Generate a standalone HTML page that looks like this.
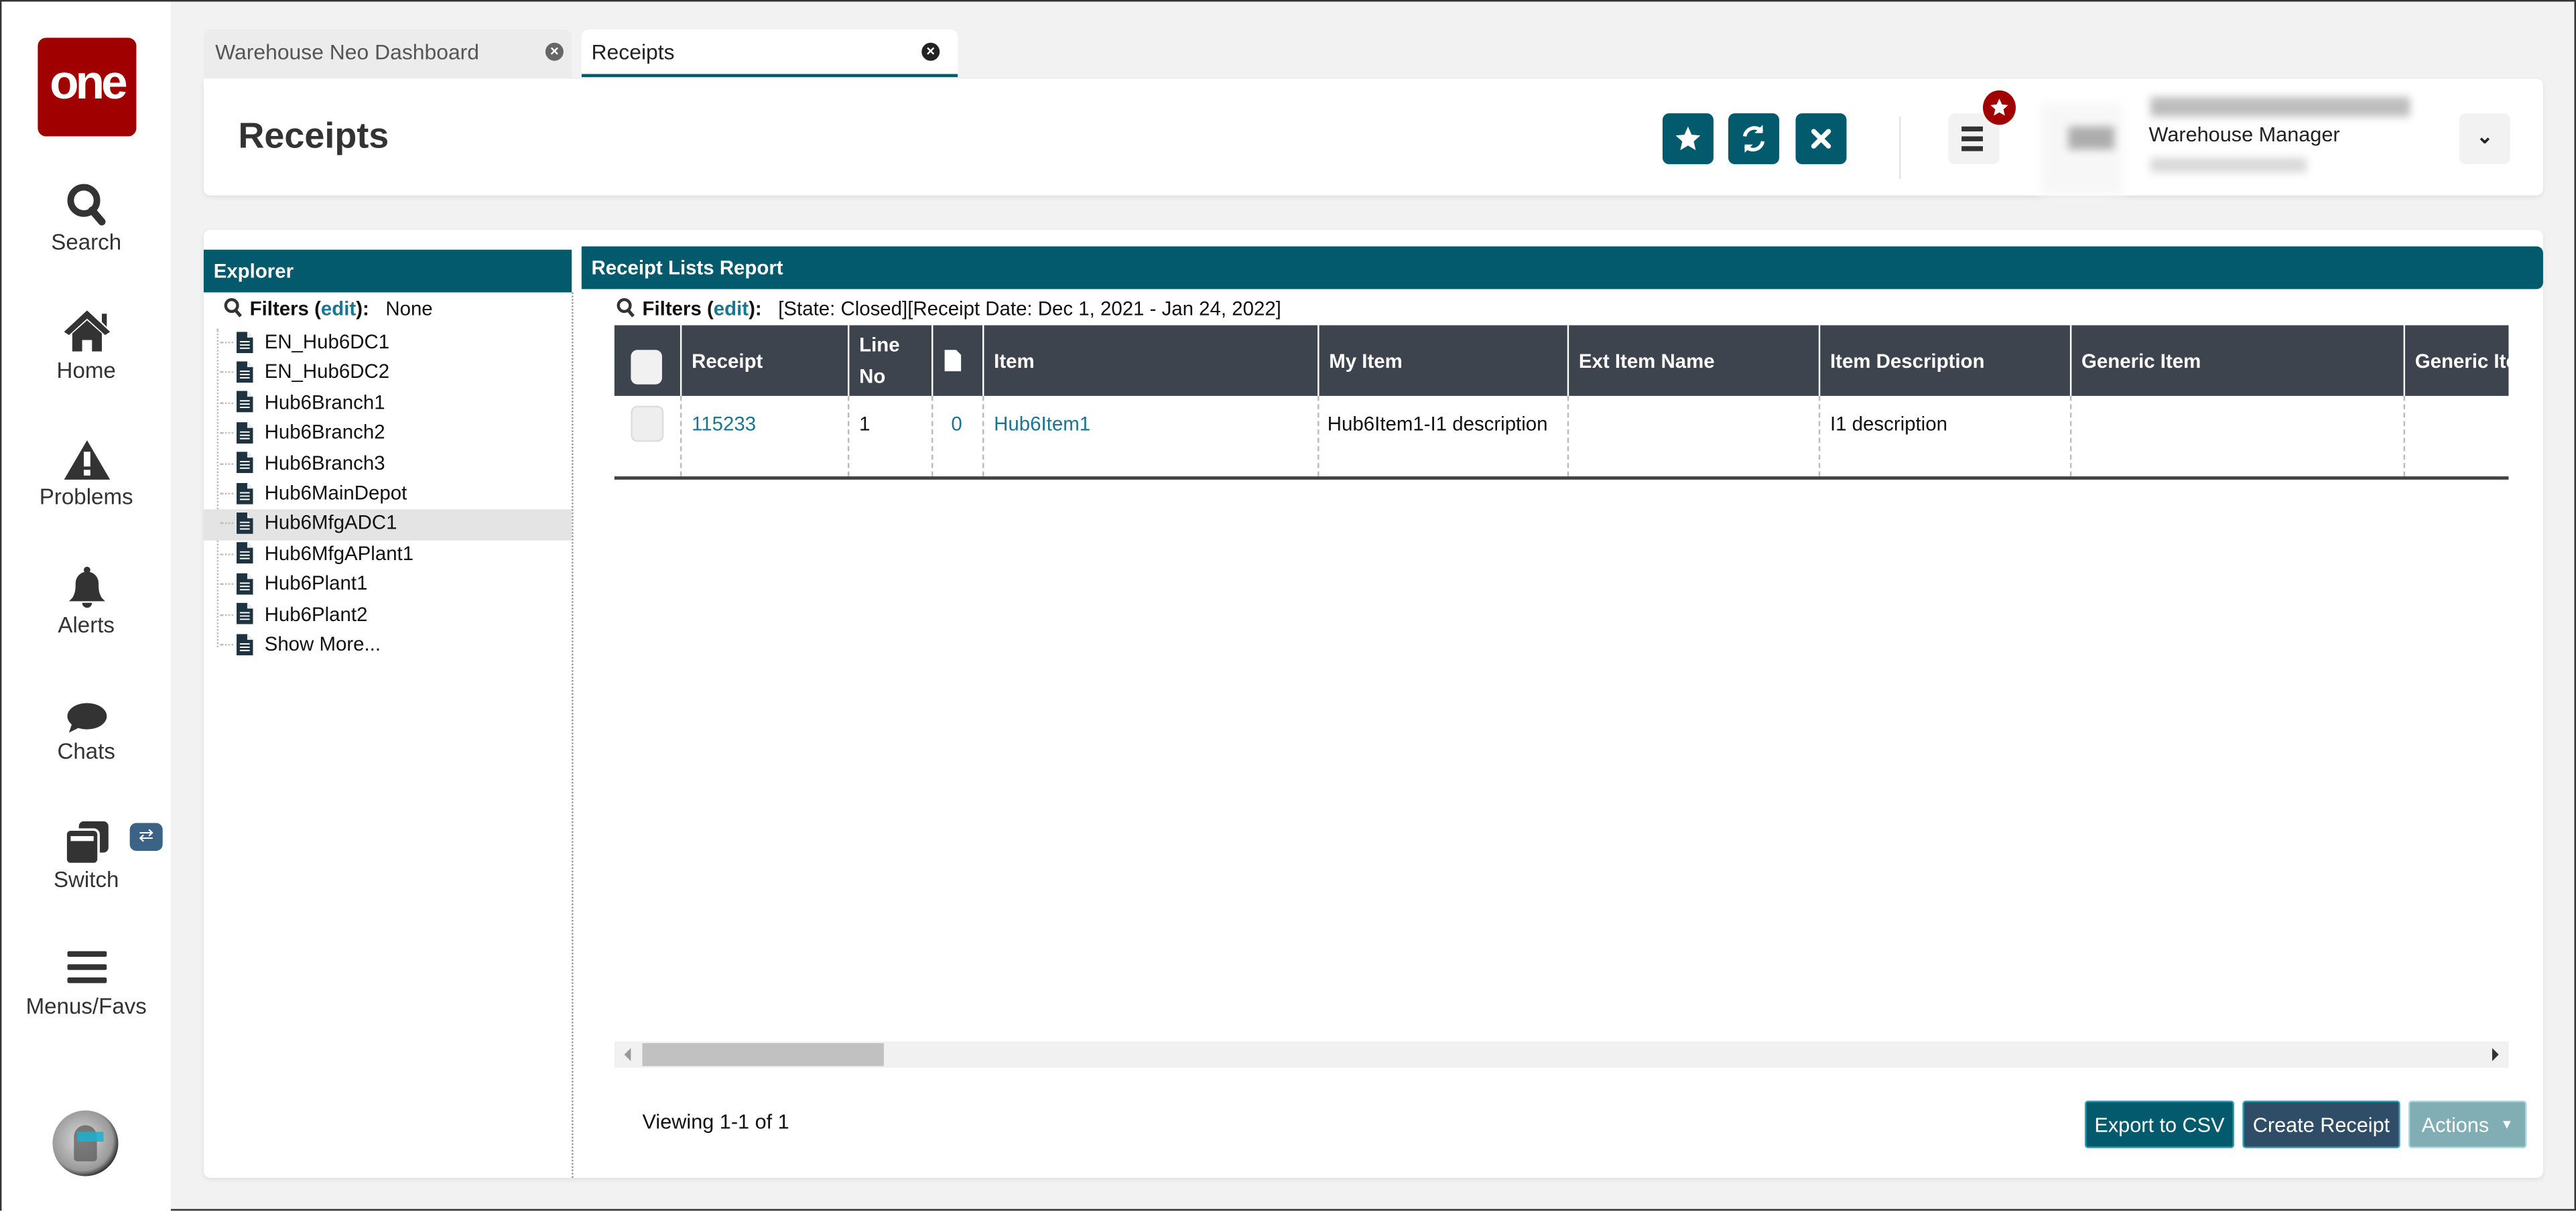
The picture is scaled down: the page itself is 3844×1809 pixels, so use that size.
<!DOCTYPE html>
<html><head><meta charset="utf-8"><style>
html,body{margin:0;padding:0;width:3844px;height:1807px;overflow:hidden;background:#f2f2f2}
#s{position:absolute;left:0;top:0;width:1568px;height:737px;transform:scale(2.4515,2.4518);transform-origin:0 0;font-family:"Liberation Sans",sans-serif;font-size:12px;color:#111;background:#f2f2f2;box-sizing:border-box;border:1px solid #333}
.a{position:absolute}
.side{left:0;top:0;width:103px;height:737px;background:#fff}
.lbl{position:absolute;width:103px;text-align:center;font-size:13.5px;color:#333;left:0}
.tb{background:#035a6c;border-radius:4px;width:31px;height:31px}
.tree{left:160px;font-size:12px}
.hc{position:absolute;top:197px;height:43px;border-left:1px solid #fff;color:#fff;font-weight:bold;font-size:12px;box-sizing:border-box;padding-left:6px;display:flex;align-items:center}
.dc{position:absolute;top:240px;height:49px;border-left:1px dashed #bbb}
.btn{position:absolute;top:669px;height:29px;color:#fff;font-size:12.5px;display:flex;align-items:center;justify-content:center;border:1px solid #2aa0b8;border-radius:2px;box-sizing:border-box}
.blur{filter:blur(2.5px);background:#444;opacity:.35}
</style></head><body><div id="s">
<div class="a side"></div>
<div class="a" style="left:22px;top:22px;width:60px;height:60px;background:#a00000;border-radius:5px;color:#fff;font-size:29px;font-weight:bold;text-align:center;line-height:56px;letter-spacing:-2px">one</div>
<svg class="a" style="left:39px;top:110px" width="26" height="28" viewBox="0 0 26 28"><circle cx="11" cy="11" r="8" fill="none" stroke="#333" stroke-width="4"/><path d="M16 17l6 7" stroke="#333" stroke-width="4.5" stroke-linecap="round"/></svg>
<div class="lbl" style="top:139px">Search</div>
<svg class="a" style="left:37px;top:187px" width="30" height="26" viewBox="0 0 30 26"><path d="M15 1L1 14l3 2L15 6l11 10 3-2z M24 3h3v8l-3-3z" fill="#333"/><path d="M6 15l9-8 9 8v11h-6v-7h-6v7H6z" fill="#333"/></svg>
<div class="lbl" style="top:217px">Home</div>
<svg class="a" style="left:37px;top:266px" width="30" height="26" viewBox="0 0 30 26"><path d="M15 1L1 25h28z" fill="#333"/><rect x="13" y="8" width="4" height="9" fill="#fff"/><rect x="13" y="19" width="4" height="3.5" fill="#fff"/></svg>
<div class="lbl" style="top:294px">Problems</div>
<svg class="a" style="left:39px;top:343px" width="26" height="26" viewBox="0 0 26 26"><circle cx="13" cy="3" r="2" fill="#333"/><path d="M4 20c2-3 2-6 2-9a7 7 0 0114 0c0 3 0 6 2 9l2 2H2z" fill="#333"/><path d="M10 23a3 3 0 006 0z" fill="#333"/></svg>
<div class="lbl" style="top:372px">Alerts</div>
<svg class="a" style="left:38px;top:424px" width="28" height="24" viewBox="0 0 28 24"><ellipse cx="14" cy="11" rx="12" ry="8" fill="#333"/><path d="M5 15l-2 6 8-4z" fill="#333"/></svg>
<div class="lbl" style="top:449px">Chats</div>
<svg class="a" style="left:38px;top:498px" width="28" height="28" viewBox="0 0 28 28"><rect x="9" y="1" width="18" height="19" rx="3" fill="#333"/><rect x="1" y="6" width="20" height="21" rx="3" fill="#333" stroke="#fff" stroke-width="1.5"/><rect x="4" y="10" width="14" height="3" fill="#fff"/></svg>
<div class="a" style="left:78px;top:500px;width:20px;height:17px;background:#3a6385;border-radius:4px;color:#fff;font-size:11px;text-align:center;line-height:17px">⇄</div>
<div class="lbl" style="top:527px">Switch</div>
<svg class="a" style="left:40px;top:578px" width="24" height="20" viewBox="0 0 24 20"><rect x="0" y="0" width="24" height="3.5" rx="1" fill="#333"/><rect x="0" y="8" width="24" height="3.5" rx="1" fill="#333"/><rect x="0" y="16" width="24" height="3.5" rx="1" fill="#333"/></svg>
<div class="lbl" style="top:604px">Menus/Favs</div>
<div class="a" style="left:31px;top:675px;width:40px;height:40px;border-radius:50%;background:radial-gradient(circle at 45% 45%,#ddd,#999 60%,#333 72%,#222)"></div>
<div class="a" style="left:44px;top:684px;width:14px;height:22px;border-radius:7px 7px 2px 2px;background:#555;opacity:.7"></div>
<div class="a" style="left:46px;top:688px;width:16px;height:6px;background:#1ab0d0;opacity:.85"></div>

<div class="a" style="left:123px;top:17px;width:224px;height:29px;background:#ececec;border-radius:4px 4px 0 0"></div>
<div class="a" style="left:130px;top:23px;color:#555;font-size:13px">Warehouse Neo Dashboard</div>
<div class="a" style="left:331px;top:25px;width:11px;height:11px;border-radius:50%;background:#666;color:#fff;font-size:9px;line-height:11px;text-align:center;font-weight:bold">×</div>
<div class="a" style="left:353px;top:17px;width:229px;height:27px;background:#fff;border-bottom:2px solid #035a6c;border-radius:4px 4px 0 0"></div>
<div class="a" style="left:359px;top:23px;color:#222;font-size:13px">Receipts</div>
<div class="a" style="left:560px;top:25px;width:11px;height:11px;border-radius:50%;background:#222;color:#fff;font-size:9px;line-height:11px;text-align:center;font-weight:bold">×</div>

<div class="a" style="left:123px;top:47px;width:1424px;height:71px;background:#fff;border-radius:0 4px 4px 4px;box-shadow:0 1px 3px rgba(0,0,0,.08)"></div>
<div class="a" style="left:144px;top:69px;font-size:22px;font-weight:bold;color:#333">Receipts</div>
<div class="a tb" style="left:1011px;top:68px"><svg width="31" height="31" viewBox="0 0 31 31"><path d="M15.5 8l2.2 5 5.3.5-4 3.6 1.2 5.3-4.7-2.8-4.7 2.8 1.2-5.3-4-3.6 5.3-.5z" fill="#fff"/></svg></div>
<div class="a tb" style="left:1051px;top:68px"><svg width="31" height="31" viewBox="0 0 31 31"><path d="M10 14a6 6 0 0110.5-3M21 17a6 6 0 01-10.5 3" fill="none" stroke="#fff" stroke-width="2.2"/><path d="M21 7v5h-5zM10 24v-5h5z" fill="#fff"/></svg></div>
<div class="a tb" style="left:1092px;top:68px"><svg width="31" height="31" viewBox="0 0 31 31"><path d="M11 11l9 9M20 11l-9 9" stroke="#fff" stroke-width="3" stroke-linecap="round"/></svg></div>
<div class="a" style="left:1155px;top:70px;width:1px;height:38px;background:#e3e3e3"></div>
<div class="a" style="left:1185px;top:68px;width:31px;height:31px;background:#f2f2f2;border-radius:4px"></div>
<div class="a" style="left:1193px;top:76px;width:13px;height:3px;background:#333;box-shadow:0 6px 0 #333,0 12px 0 #333"></div>
<div class="a" style="left:1206px;top:54px;width:20px;height:21px;border-radius:50%;background:#a00000"></div>
<svg class="a" style="left:1206px;top:54px" width="20" height="21" viewBox="0 0 20 21"><path d="M10 5l1.6 3.6 3.8.4-2.9 2.6.9 3.8-3.4-2-3.4 2 .9-3.8-2.9-2.6 3.8-.4z" fill="#fff"/></svg>
<div class="a" style="left:1241px;top:62px;width:50px;height:56px;background:#f7f7f7;filter:blur(3px)"></div>
<div class="a blur" style="left:1258px;top:76px;width:28px;height:14px;background:#555;opacity:.45"></div>
<div class="a blur" style="left:1308px;top:58px;width:158px;height:12px"></div>
<div class="a" style="left:1307px;top:74px;font-size:12.5px;color:#222">Warehouse Manager</div>
<div class="a blur" style="left:1308px;top:95px;width:95px;height:9px;opacity:.2"></div>
<div class="a" style="left:1496px;top:68px;width:31px;height:31px;background:#f2f2f2;border-radius:4px;text-align:center;line-height:29px;font-size:12px;color:#222;font-weight:bold">⌄</div>

<div class="a" style="left:123px;top:139px;width:1424px;height:577px;background:#fff;border-radius:4px;box-shadow:0 1px 3px rgba(0,0,0,.08)"></div>
<div class="a" style="left:123px;top:151px;width:224px;height:26px;background:#035a6c;color:#fff;font-weight:bold;font-size:12px;line-height:26px;padding-left:6px;box-sizing:border-box">Explorer</div>
<div class="a" style="left:353px;top:149px;width:1194px;height:26px;background:#035a6c;color:#fff;font-weight:bold;font-size:12px;line-height:26px;padding-left:6px;box-sizing:border-box;border-radius:0 4px 4px 0">Receipt Lists Report</div>
<div class="a" style="left:347px;top:177px;width:0;height:539px;border-left:1px dotted #999"></div>
<svg class="a" style="left:135px;top:180px" width="12" height="13" viewBox="0 0 12 13"><circle cx="5" cy="5" r="3.6" fill="none" stroke="#333" stroke-width="1.8"/><path d="M7.5 8l3 3.5" stroke="#333" stroke-width="2"/></svg>
<div class="a" style="left:151px;top:180px"><b>Filters (<span style="color:#1a7590">edit</span>):</b>&nbsp;&nbsp;&nbsp;None</div>
<div class="a" style="left:131px;top:199px;height:194px;border-left:1px dotted #bbb"></div>
<div class="a" style="left:123px;top:309px;width:224px;height:19px;background:#e4e4e4"></div>
<div id="tree"></div>

<svg class="a" style="left:374px;top:180px" width="12" height="13" viewBox="0 0 12 13"><circle cx="5" cy="5" r="3.6" fill="none" stroke="#333" stroke-width="1.8"/><path d="M7.5 8l3 3.5" stroke="#333" stroke-width="2"/></svg>
<div class="a" style="left:390px;top:180px"><b>Filters (<span style="color:#1a7590">edit</span>):</b>&nbsp;&nbsp;&nbsp;[State: Closed][Receipt Date: Dec 1, 2021 - Jan 24, 2022]</div>

<div class="a" style="left:373px;top:197px;width:1153px;height:43px;background:#3d444d"></div>
<div class="a" style="left:383px;top:212px;width:19px;height:21px;border-radius:4px;background:#f1f1f1"></div>
<div class="hc" style="left:413px;width:102px">Receipt</div>
<div class="hc" style="left:515px;width:51px;line-height:19px">Line<br>No</div>
<div class="hc" style="left:566px;width:31px"><svg width="12" height="15" viewBox="0 0 12 15"><path d="M1 1h7l3 3v10H1z" fill="#fff"/></svg></div>
<div class="hc" style="left:597px;width:204px">Item</div>
<div class="hc" style="left:801px;width:152px">My Item</div>
<div class="hc" style="left:953px;width:153px">Ext Item Name</div>
<div class="hc" style="left:1106px;width:153px">Item Description</div>
<div class="hc" style="left:1259px;width:203px">Generic Item</div>
<div class="hc" style="left:1462px;width:64px;overflow:hidden;white-space:nowrap">Generic Item</div>

<div class="a" style="left:383px;top:246px;width:18px;height:20px;border-radius:4px;background:#eee;border:1px solid #ddd"></div>
<div class="dc" style="left:413px"></div><div class="dc" style="left:515px"></div><div class="dc" style="left:566px"></div><div class="dc" style="left:597px"></div><div class="dc" style="left:801px"></div><div class="dc" style="left:953px"></div><div class="dc" style="left:1106px"></div><div class="dc" style="left:1259px"></div><div class="dc" style="left:1462px"></div>
<div class="a" style="left:420px;top:250px;color:#1a7590">115233</div>
<div class="a" style="left:522px;top:250px">1</div>
<div class="a" style="left:578px;top:250px;color:#1a7590">0</div>
<div class="a" style="left:604px;top:250px;color:#1a7590">Hub6Item1</div>
<div class="a" style="left:807px;top:250px">Hub6Item1-I1 description</div>
<div class="a" style="left:1113px;top:250px">I1 description</div>
<div class="a" style="left:373px;top:289px;width:1153px;height:2px;background:#444"></div>

<div class="a" style="left:373px;top:633px;width:1153px;height:16px;background:#f1f1f1"></div>
<div class="a" style="left:390px;top:634px;width:147px;height:14px;background:#c1c1c1"></div>
<div class="a" style="left:379px;top:637px;width:0;height:0;border-top:4px solid transparent;border-bottom:4px solid transparent;border-right:4px solid #999"></div>
<div class="a" style="left:1516px;top:637px;width:0;height:0;border-top:4px solid transparent;border-bottom:4px solid transparent;border-left:4px solid #333"></div>
<div class="a" style="left:390px;top:675px;font-size:12.5px">Viewing 1-1 of 1</div>
<div class="btn" style="left:1268px;width:91px;background:#035a6c">Export to CSV</div>
<div class="btn" style="left:1364px;width:96px;background:#2f4d66">Create Receipt</div>
<div class="btn" style="left:1465px;width:72px;background:#81adb5;border-color:#a9d6e0">Actions&nbsp;&nbsp;<span style="font-size:8px">▼</span></div>
<script>
var n=["EN_Hub6DC1","EN_Hub6DC2","Hub6Branch1","Hub6Branch2","Hub6Branch3","Hub6MainDepot","Hub6MfgADC1","Hub6MfgAPlant1","Hub6Plant1","Hub6Plant2","Show More..."];
var h="";for(var i=0;i<n.length;i++){var y=200+i*18.4;h+='<svg class="a" style="left:143px;top:'+(y+0.5)+'px" width="10" height="13" viewBox="0 0 10 13"><path d="M0 0h6.5l3.5 3.5V13H0z" fill="#1e3340"/><path d="M6.5 0v3.5H10" fill="#fff" opacity=".9"/><path d="M2 6h6M2 8h6M2 10h6" stroke="#fff" stroke-width=".8"/></svg><div class="a" style="left:133px;top:'+(y+7)+'px;width:8px;border-top:1px dotted #bbb"></div><div class="a tree" style="top:'+y+'px">'+n[i]+'</div>';}
document.getElementById("tree").outerHTML=h;
</script>
</div></body></html>
